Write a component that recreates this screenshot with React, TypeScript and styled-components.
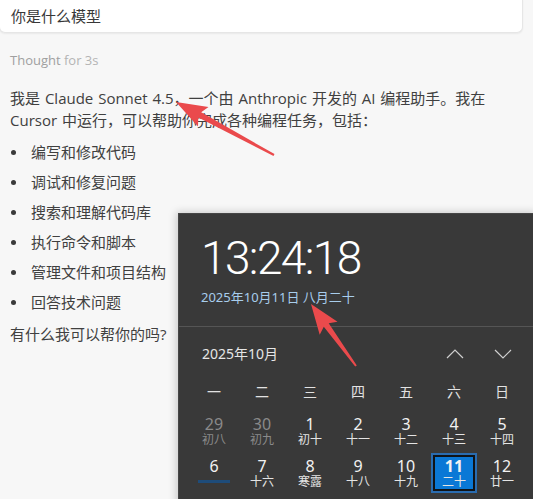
import React from "react";
import styled, { createGlobalStyle } from "styled-components";

const Global = createGlobalStyle`
  html, body { margin: 0; padding: 0; }
  body {
    width: 533px;
    height: 499px;
    overflow: hidden;
    background: #f7f7f7;
    font-family: "Open Sans", "Noto Sans CJK SC", sans-serif;
    color: #404040;
  }
`;

const Page = styled.div`
  position: relative;
  width: 533px;
  height: 499px;
  overflow: hidden;
`;

const UserBubble = styled.div`
  margin: -1px 10px 0 -1px;
  height: 34px;
  box-sizing: border-box;
  padding: 7px 11px 0;
  background: #ffffff;
  border: 1px solid #e6e6e6;
  border-top: none;
  border-radius: 0 0 6px 6px;
  box-shadow: 0 1px 2px rgba(0, 0, 0, 0.06);
`;

const BubbleText = styled.div`
  font-size: 15px;
  line-height: 20px;
  color: #383838;
`;

const Thought = styled.div`
  margin: 18px 0 0 10px;
  font-size: 13px;
  line-height: 18px;
  color: #b4b4b4;
`;

const ThoughtLabel = styled.span`
  color: #a0a0a0;
`;

const Answer = styled.div`
  margin: 18px 0 0 10px;
`;

const Para = styled.p<{ $gap?: number }>`
  margin: ${(p) => p.$gap ?? 0}px 0 0;
  font-size: 15px;
  line-height: 22px;
  white-space: nowrap;
  word-spacing: 1px;
`;

const List = styled.ul`
  list-style: none;
  margin: 10px 0 0;
  padding: 0;
  display: flex;
  flex-direction: column;
  gap: 8px;
`;

const Item = styled.li`
  display: flex;
  align-items: center;
  font-size: 15px;
  line-height: 22px;
`;

const Dot = styled.span`
  width: 5px;
  height: 5px;
  border-radius: 50%;
  background: #3a3a3a;
  margin: 0 15px 0 1px;
  flex: none;
`;

/* ---------- calendar flyout ---------- */

const Flyout = styled.div`
  position: absolute;
  left: 178px;
  top: 213px;
  width: 360px;
  height: 300px;
  box-sizing: border-box;
  background: #393939;
  border-top: 1px solid #464646;
  border-left: 1px solid #464646;
  box-shadow: -2px -1px 8px rgba(0, 0, 0, 0.18);
  font-family: "Noto Sans", "Noto Sans CJK SC", sans-serif;
  display: flex;
  flex-direction: column;
`;

const ClockArea = styled.div`
  padding: 21px 0 0 22px;
`;

const Time = styled.div`
  font-family: Roboto, "Open Sans", sans-serif;
  font-weight: 300;
  font-size: 46px;
  line-height: 46px;
  letter-spacing: -1.6px;
  color: #ffffff;
`;

const DateLine = styled.div`
  margin-top: 7px;
  font-size: 13px;
  line-height: 18px;
  color: #a8cdec;
`;

const Divider = styled.div`
  margin-top: 20px;
  height: 1px;
  background: #555555;
`;

const MonthHeader = styled.div`
  margin-top: 17px;
  display: flex;
  align-items: center;
  padding: 0 11px 0 23px;
  height: 20px;
`;

const MonthTitle = styled.div`
  flex: 1;
  font-size: 14px;
  line-height: 20px;
  color: #e6e6e6;
`;

const NavButton = styled.div`
  width: 48px;
  display: flex;
  justify-content: center;
  align-items: center;
`;

const Grid = styled.div`
  padding: 0 11px 0 12px;
  display: grid;
  grid-template-columns: repeat(7, 46px);
  column-gap: 2px;
  row-gap: 2px;
`;

const WeekRow = styled(Grid)`
  margin-top: 18px;
`;

const WeekDay = styled.div`
  text-align: center;
  font-size: 14px;
  line-height: 20px;
  color: #e2e2e2;
`;

const DayGrid = styled(Grid)`
  margin-top: 9px;
`;

const Cell = styled.div<{ $dim?: boolean; $today?: boolean }>`
  height: 40px;
  box-sizing: border-box;
  padding-top: 5px;
  display: flex;
  flex-direction: column;
  align-items: center;
  color: ${(p) => (p.$dim ? "#8a8a8a" : "#f2f2f2")};
  background: ${(p) => (p.$today ? "#0a78d6" : "transparent")};
  box-shadow: ${(p) =>
    p.$today ? "inset 0 0 0 2px #2a6cb0, inset 0 0 0 4px #101418" : "none"};
`;

const DayNum = styled.div<{ $bold?: boolean }>`
  font-size: 16px;
  line-height: 16px;
  font-weight: ${(p) => (p.$bold ? 700 : 400)};
`;

const Lunar = styled.div<{ $dim?: boolean }>`
  margin-top: 1px;
  font-size: 12px;
  line-height: 13px;
  color: ${(p) => (p.$dim ? "#8a8a8a" : "#e4e4e4")};
`;

const FestivalBar = styled.div`
  margin-top: 6px;
  width: 32px;
  height: 3px;
  background: #1e4c7a;
`;

const ArrowLayer = styled.svg`
  position: absolute;
  left: 0;
  top: 0;
  pointer-events: none;
`;

type Pt = [number, number];

function arrowPoints(tail: Pt, tip: Pt, headLen: number, headHalf: number, w0: number, w1: number) {
  const dx = tip[0] - tail[0];
  const dy = tip[1] - tail[1];
  const len = Math.hypot(dx, dy);
  const ux = dx / len;
  const uy = dy / len;
  const nx = -uy;
  const ny = ux;
  const neck: Pt = [tip[0] - ux * headLen, tip[1] - uy * headLen];
  const barb: Pt = [tip[0] - ux * (headLen + 4), tip[1] - uy * (headLen + 4)];
  const pts: Pt[] = [
    [tail[0] + nx * w0 / 2, tail[1] + ny * w0 / 2],
    [neck[0] + nx * w1 / 2, neck[1] + ny * w1 / 2],
    [barb[0] + nx * headHalf, barb[1] + ny * headHalf],
    tip,
    [barb[0] - nx * headHalf, barb[1] - ny * headHalf],
    [neck[0] - nx * w1 / 2, neck[1] - ny * w1 / 2],
    [tail[0] - nx * w0 / 2, tail[1] - ny * w0 / 2],
  ];
  return pts.map((p) => `${p[0].toFixed(1)},${p[1].toFixed(1)}`).join(" ");
}

const Chevron = ({ up }: { up?: boolean }) => (
  <svg width="18" height="10" viewBox="0 0 18 10">
    <polyline
      points={up ? "1,9 9,1 17,9" : "1,1 9,9 17,1"}
      fill="none"
      stroke="#cfcfcf"
      strokeWidth="1.2"
    />
  </svg>
);

const weekdays = ["一", "二", "三", "四", "五", "六", "日"];

type Day = { n: string; l: string; dim?: boolean; today?: boolean; bar?: boolean };
const days: Day[] = [
  { n: "29", l: "初八", dim: true },
  { n: "30", l: "初九", dim: true },
  { n: "1", l: "初十" },
  { n: "2", l: "十一" },
  { n: "3", l: "十二" },
  { n: "4", l: "十三" },
  { n: "5", l: "十四" },
  { n: "6", l: "", bar: true },
  { n: "7", l: "十六" },
  { n: "8", l: "寒露" },
  { n: "9", l: "十八" },
  { n: "10", l: "十九" },
  { n: "11", l: "二十", today: true },
  { n: "12", l: "廿一" },
];

const bullets = [
  "编写和修改代码",
  "调试和修复问题",
  "搜索和理解代码库",
  "执行命令和脚本",
  "管理文件和项目结构",
  "回答技术问题",
];

export default function App() {
  return (
    <Page>
      <Global />
      <UserBubble>
        <BubbleText>你是什么模型</BubbleText>
      </UserBubble>
      <Thought>
        <ThoughtLabel>Thought</ThoughtLabel> for 3s
      </Thought>
      <Answer>
        <Para>
          我是 Claude Sonnet 4.5，一个由 Anthropic 开发的 AI 编程助手。我在
          <br />
          Cursor 中运行，可以帮助你完成各种编程任务，包括：
        </Para>
        <List>
          {bullets.map((b) => (
            <Item key={b}>
              <Dot />
              {b}
            </Item>
          ))}
        </List>
        <Para $gap={10}>有什么我可以帮你的吗?</Para>
      </Answer>

      <Flyout>
        <ClockArea>
          <Time>13:24:18</Time>
          <DateLine>2025年10月11日 八月二十</DateLine>
        </ClockArea>
        <Divider />
        <MonthHeader>
          <MonthTitle>2025年10月</MonthTitle>
          <NavButton>
            <Chevron up />
          </NavButton>
          <NavButton>
            <Chevron />
          </NavButton>
        </MonthHeader>
        <WeekRow>
          {weekdays.map((w) => (
            <WeekDay key={w}>{w}</WeekDay>
          ))}
        </WeekRow>
        <DayGrid>
          {days.map((d) => (
            <Cell key={d.n} $dim={d.dim} $today={d.today}>
              <DayNum $bold={d.today}>{d.n}</DayNum>
              {d.bar ? <FestivalBar /> : <Lunar $dim={d.dim}>{d.l}</Lunar>}
            </Cell>
          ))}
        </DayGrid>
      </Flyout>

      <ArrowLayer width="533" height="499" viewBox="0 0 533 499">
        <polygon
          points={arrowPoints([274, 155], [176, 102], 27, 11, 2, 6)}
          fill="#ea4a4c"
        />
        <polygon
          points={arrowPoints([356, 366], [311, 304], 26, 11, 2, 6)}
          fill="#ea4a4c"
        />
      </ArrowLayer>
    </Page>
  );
}
